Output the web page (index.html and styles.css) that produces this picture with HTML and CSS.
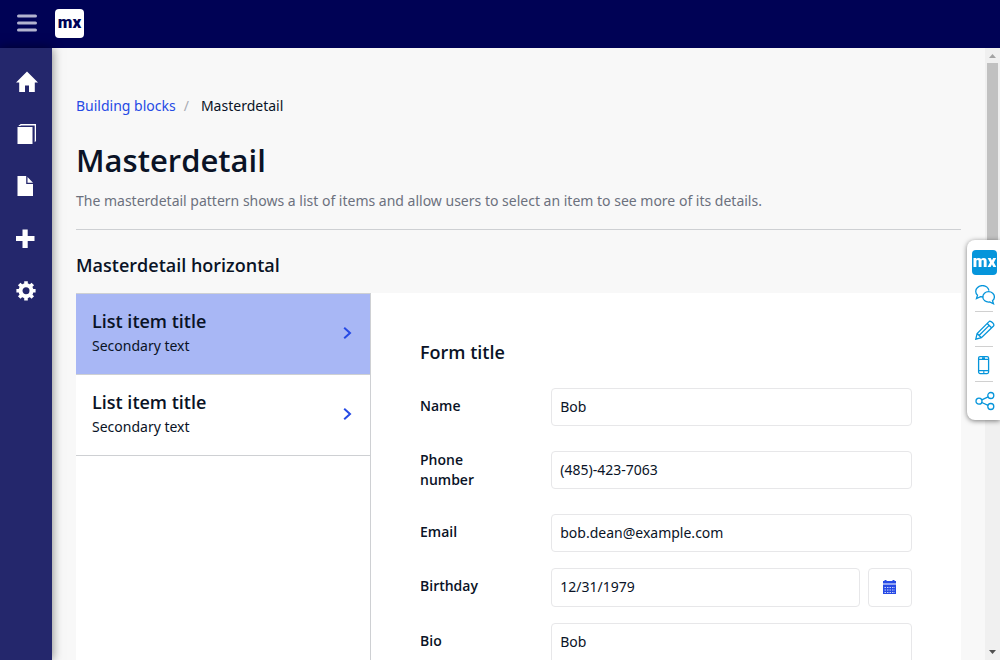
FILE: index.html
```html
<!DOCTYPE html>
<html lang="en">
<head>
<meta charset="utf-8">
<meta name="viewport" content="width=device-width, initial-scale=1">
<title>Masterdetail</title>
<link rel="stylesheet" href="styles.css">
</head>
<body>
<div class="app">
  <header class="topbar">
    <button class="menu-toggle" type="button" aria-label="Toggle menu">
      <svg width="20" height="18" viewBox="0 0 20 18"><path d="M1.500 2h17M1.500 9h17M1.500 16h17" stroke="#b2b3cf" stroke-width="3" stroke-linecap="round"/></svg>
    </button>
    <a class="logo" href="#">mx</a>
  </header>
  <div class="body">
    <nav class="sidebar" aria-label="Main">
      <a class="side-link" href="#" aria-label="Home"><svg width="22" height="22" viewBox="0 0 22 22"><path d="M11 .5 22 11.500h-3.200V21H13v-6.500H9V21H3.200v-9.500H0z"/></svg></a>
      <a class="side-link" href="#" aria-label="Page templates"><svg width="22" height="22" viewBox="0 0 22 22"><path d="M1.500 4h15v17h-15zM2.300 3 4.700 1H20v17l-1.300 1.300V2.500H5L4.200 3z"/></svg></a>
      <a class="side-link" href="#" aria-label="Building blocks"><svg width="22" height="22" viewBox="0 0 22 22"><path d="M1.500 1h8.700v8H17v12H1.500zM11.500 2 17 7.700h-5.500z"/></svg></a>
      <a class="side-link" href="#" aria-label="Widgets"><svg width="22" height="22" viewBox="0 0 22 22"><path d="M6.500 2.500h5.200V9H18.500v5h-6.800v7H6.500v-7H0V9h6.500z"/></svg></a>
      <a class="side-link" href="#" aria-label="Settings"><svg width="22" height="22" viewBox="0 0 22 22"><path fill="none" stroke="#fff" stroke-width="4" d="M10 6.300a5.500 5.500 0 1 0 0 11 5.500 5.500 0 0 0 0-11z"/><path stroke="#fff" stroke-width="3.600" d="M10 2.200v3M10 18.400v3M.4 11.800h3M16.600 11.800h3M3.200 5l2.100 2.100M14.700 16.500l2.100 2.100M3.200 18.600l2.100-2.100M14.700 7.100 16.800 5"/></svg></a>
    </nav>
    <main class="content">
      <nav class="breadcrumb" aria-label="Breadcrumb">
        <a href="#">Building blocks</a><span class="slash">/</span><span>Masterdetail</span>
      </nav>
      <div class="page-head">
        <h1>Masterdetail</h1>
        <p>The masterdetail pattern shows a list of items and allow users to select an item to see more of its details.</p>
      </div>
      <h2 class="section-title">Masterdetail horizontal</h2>
      <section class="masterdetail">
        <ul class="master">
          <li><button class="item item-selected" type="button">
            <span class="item-text"><span class="item-title">List item title</span><span>Secondary text</span></span>
            <svg width="9" height="12" viewBox="0 0 9 12"><path d="M1.200.8 7 6l-5.800 5.200"/></svg>
          </button></li>
          <li><button class="item" type="button">
            <span class="item-text"><span class="item-title">List item title</span><span>Secondary text</span></span>
            <svg width="9" height="12" viewBox="0 0 9 12"><path d="M1.200.8 7 6l-5.800 5.200"/></svg>
          </button></li>
        </ul>
        <form class="detail">
          <h3>Form title</h3>
          <div class="row"><label for="name">Name</label><input id="name" type="text" value="Bob"></div>
          <div class="row"><label for="phone">Phone number</label><input id="phone" type="text" value="(485)-423-7063"></div>
          <div class="row"><label for="email">Email</label><input id="email" type="text" value="bob.dean@example.com"></div>
          <div class="row"><label for="birthday">Birthday</label>
            <div class="date"><input id="birthday" type="text" value="12/31/1979">
              <button type="button" aria-label="Show calendar"><svg width="13" height="14" viewBox="0 0 13 14"><path fill="#264ae5" d="M0 1h1.500V0h2v1h6V0h2v1H13v2H0zM0 5h13v9H0z"/><path fill="#92a4f2" d="M0 3h13v2H0z"/><path stroke="#c9d1fa" stroke-dasharray="1.500 1" d="M1.500 7.500h10.500M1.500 10h10.500M1.500 12.500h10.500"/></svg></button>
            </div>
          </div>
          <div class="row"><label for="bio">Bio</label><textarea id="bio" rows="4">Bob</textarea></div>
        </form>
      </section>
    </main>
    <div class="scrollbar" aria-hidden="true">
      <svg width="7" height="4" viewBox="0 0 7 4"><path fill="#a3a3a3" d="M3.500 0 7 4H0z"/></svg>
      <div class="thumb"></div>
      <svg class="down" width="7" height="4" viewBox="0 0 7 4"><path fill="#505050" d="M0 0h7L3.500 4z"/></svg>
    </div>
  </div>
</div>
<aside class="toolbox" aria-label="Tools">
  <a class="logo logo-blue" href="#">mx</a>
  <button type="button" aria-label="Feedback"><svg width="20" height="20" viewBox="0 0 20 20"><path d="M8.300 11.800 5.500 11.700 1.500 13.500l1-3.200C.2 8.200.2 4.700 2.300 2.700 5-.1 9.800-.1 12.300 2.400c1 .9 1.500 2 1.600 3.200"/><path d="M13.500 6.700c3.400 0 5.900 2.300 5.900 5.200 0 1.600-.7 2.900-1.900 3.800l1 3.100-3.800-1.800c-4 .5-6.900-2-6.900-5.100 0-2.900 2.500-5.200 5.700-5.200z"/></svg></button>
  <button type="button" aria-label="Edit"><svg width="20" height="20" viewBox="0 0 20 20"><path d="M.8 19.200 2.100 13.500 14 1.600c1.500-1.600 6 2.600 4.500 4.400L6.400 17.700zM12.200 3.500l4.300 4.300M14.200 5.400 4.300 15.300M2.100 13.500l4.300 4.200"/></svg></button>
  <button type="button" aria-label="Preview on device"><svg width="20" height="20" viewBox="0 0 20 20"><rect x="3.600" y="1.600" width="10" height="17" rx="1.500"/><path d="M3.600 4.400h10M3.600 15.600h10M7 3h3M8 17.200h1.500"/></svg></button>
  <button type="button" aria-label="Share"><svg width="20" height="20" viewBox="0 0 20 20"><circle cx="4" cy="10.200" r="3"/><circle cx="15.800" cy="4.500" r="3"/><circle cx="15.800" cy="15.500" r="3"/><path d="m6.800 8.900 6.300-3M6.800 11.500l6.300 2.800"/></svg></button>
</aside>
</body>
</html>
```
FILE: styles.css
```css
* { box-sizing: border-box; }
body {
  margin: 0;
  font: 14px/20px "Noto Sans", "Open Sans", sans-serif;
  color: #0a1326;
  background: #f8f8f8;
}
a { text-decoration: none; color: #264ae5; }
h1, h2, h3, p, ul { margin: 0; padding: 0; }
h1, h2, h3, label, .item-title { font-family: "Open Sans", "Noto Sans", sans-serif; font-weight: 600; }
button, input, textarea { font: inherit; color: inherit; }
button { padding: 0; border: 0; background: none; cursor: pointer; }
svg { display: block; }

.app { height: 100vh; display: flex; flex-direction: column; overflow: hidden; }
.topbar {
  flex: none;
  height: 48px;
  display: flex;
  align-items: center;
  gap: 18px;
  padding: 0 17px 2px;
  background: #000255;
}
.logo {
  width: 29px;
  height: 29px;
  border-radius: 4px;
  background: #fff;
  color: #000255;
  font: 900 17px/26px Roboto, sans-serif;
  text-align: center;
}
.logo-blue {
  width: 25px;
  height: 25px;
  background: #0595db;
  color: #fff;
  line-height: 22px;
}

.body { flex: 1; min-height: 0; display: flex; }
.sidebar {
  flex: none;
  width: 52px;
  padding-top: 8px;
  background: #24276c;
  box-shadow: 0 0 10px rgba(0, 0, 0, .5);
}
.side-link {
  height: 52px;
  display: flex;
  align-items: center;
  padding-left: 16px;
}
.side-link svg { fill: #fff; }

.content { flex: 1; min-width: 0; padding: 48px 24px 0; overflow: hidden; }
.breadcrumb { display: flex; }
.breadcrumb .slash { padding: 0 12px 0 8px; color: #a9acb3; }
.page-head {
  margin-top: 24px;
  padding-bottom: 18px;
  border-bottom: 1px solid #ced0d3;
}
.page-head h1 { font-size: 31px; line-height: 40px; }
.page-head p { margin-top: 11px; color: #6c717e; }
.section-title { margin: 23px 0 16px; font-size: 18px; line-height: 24px; }

.masterdetail {
  display: grid;
  grid-template-columns: 1fr 2fr;
  min-height: 480px;
  background: #fff;
}
.master { list-style: none; border-right: 1px solid #ced0d3; }
.master li { border-bottom: 1px solid #ced0d3; }
.master li:first-child { border-top: 1px solid #ced0d3; }
.item {
  width: 100%;
  height: 80px;
  padding: 0 18px 2px 16px;
  display: flex;
  align-items: center;
  justify-content: space-between;
  text-align: left;
}
.item-selected { background: #a8b7f5; }
.item-text { display: grid; gap: 3px; padding-bottom: 2px; }
.item-title { font-size: 18px; line-height: 24px; }
.item svg { fill: none; stroke: #264ae5; stroke-width: 2; }

.detail { display: grid; gap: 16px; align-content: start; padding: 47px 49px; }
.detail h3 { font-size: 18px; line-height: 24px; margin-bottom: 8px; }
.row {
  display: grid;
  grid-template-columns: 1fr 3fr;
  column-gap: 11px;
  align-items: center;
}
.row label { align-self: start; padding: 8px 24px 8px 0; }
input, textarea {
  display: block;
  width: 100%;
  min-width: 0;
  height: 38px;
  padding: 7px 8px 9px;
  border: 1px solid #e7e7e9;
  border-radius: 4px;
  background: #fff;
}
textarea { height: 96px; padding-top: 8px; resize: none; }
.date { display: flex; gap: 8px; }
.date input { height: 39px; }
.date button {
  flex: none;
  width: 44px;
  display: grid;
  place-items: center;
  padding: 0 2px 2px 0;
  border: 1px solid #e7e7e9;
  border-radius: 4px;
}

.scrollbar {
  flex: none;
  width: 15px;
  display: flex;
  flex-direction: column;
  align-items: center;
  padding: 6px 0;
  background: #f0f0f0;
}
.thumb { width: 11px; height: 240px; margin-top: 5px; background: #c1c1c1; }
.down { margin-top: auto; }

.toolbox {
  position: fixed;
  right: 0;
  top: 240px;
  padding: 10px 3px 3px 5px;
  border-radius: 8px 0 0 8px;
  background: #fff;
  box-shadow: 0 1px 5px rgba(0, 0, 0, .5);
}
.toolbox .logo { display: block; margin-bottom: 2px; }
.toolbox button {
  display: block;
  width: 18px;
  height: 35px;
  padding-top: 2px;
  margin-left: 3px;
  border-bottom: 1px solid #d0d0d0;
}
.toolbox button:last-child { border-bottom: 0; }
.toolbox button svg { fill: none; stroke: #0595db; stroke-width: 1.3; }
```
